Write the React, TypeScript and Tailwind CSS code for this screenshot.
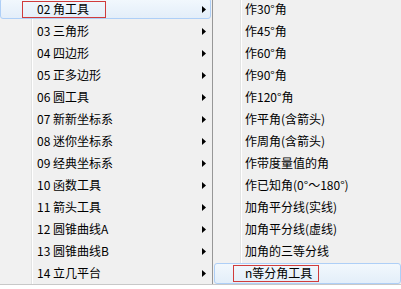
import React from "react";

const left = [
  "02 角工具",
  "03 三角形",
  "04 四边形",
  "05 正多边形",
  "06 圆工具",
  "07 新新坐标系",
  "08 迷你坐标系",
  "09 经典坐标系",
  "10 函数工具",
  "11 箭头工具",
  "12 圆锥曲线A",
  "13 圆锥曲线B",
  "14 立几平台",
];

const right = [
  "作30°角",
  "作45°角",
  "作60°角",
  "作90°角",
  "作120°角",
  "作平角(含箭头)",
  "作周角(含箭头)",
  "作带度量值的角",
  "作已知角(0°～180°)",
  "加角平分线(实线)",
  "加角平分线(虚线)",
  "加角的三等分线",
  "n等分角工具",
];

const font = { fontFamily: '"Microsoft YaHei", "Noto Sans CJK SC", sans-serif' };

function Arrow() {
  return (
    <svg width="4" height="7" viewBox="0 0 4 7" className="absolute right-[6px] top-[8px]">
      <path d="M0 0 L4 3.5 L0 7 Z" fill="#000" />
    </svg>
  );
}

export default function App() {
  return (
    <div className="w-[401px] h-[289px] bg-white overflow-hidden text-[12px] text-black" style={font}>
      <div className="flex h-[285px] border-b border-[#c8c8c8]">
        <div className="w-[213px] shrink-0 border-r border-[#979797] bg-[linear-gradient(to_right,#f1f1f1_31px,#e2e3e3_31px,#e2e3e3_32px,#ffffff_32px,#ffffff_33px,#f0f0f0_33px)]">
          <div className="-mt-[2px] flex flex-col">
            {left.map((t, i) => (
              <div key={t} className="relative h-[22px] flex items-center pl-[37px]">
                {i === 0 && (
                  <div className="absolute left-[0px] right-[1px] top-[0px] bottom-[1px] rounded-[3px] border border-[#aecff7] bg-[linear-gradient(to_bottom,#f2f8fd,#e3eef9)]" />
                )}
                {i === 0 && (
                  <div className="absolute left-[22px] w-[84px] top-[3px] h-[17px] border border-[#d03c3c]" />
                )}
                <span className="relative leading-none">{t}</span>
                <Arrow />
              </div>
            ))}
          </div>
        </div>
        <div className="flex-1 bg-[linear-gradient(to_right,#f1f1f1_27px,#e2e3e3_27px,#e2e3e3_28px,#ffffff_28px,#ffffff_29px,#f0f0f0_29px)]">
          <div className="-mt-[2px] flex flex-col">
            {right.map((t, i) => (
              <div key={t} className="relative h-[22px] flex items-center pl-[32px]">
                {i === 12 && (
                  <div className="absolute left-[1px] right-[0px] top-[1px] bottom-[0px] rounded-[3px] border border-[#aecff7] bg-[linear-gradient(to_bottom,#f2f8fd,#e3eef9)]" />
                )}
                {i === 12 && (
                  <div className="absolute left-[20px] w-[86px] top-[3px] h-[17px] border border-[#d03c3c]" />
                )}
                <span className="relative leading-none">{t}</span>
              </div>
            ))}
          </div>
        </div>
      </div>
    </div>
  );
}
